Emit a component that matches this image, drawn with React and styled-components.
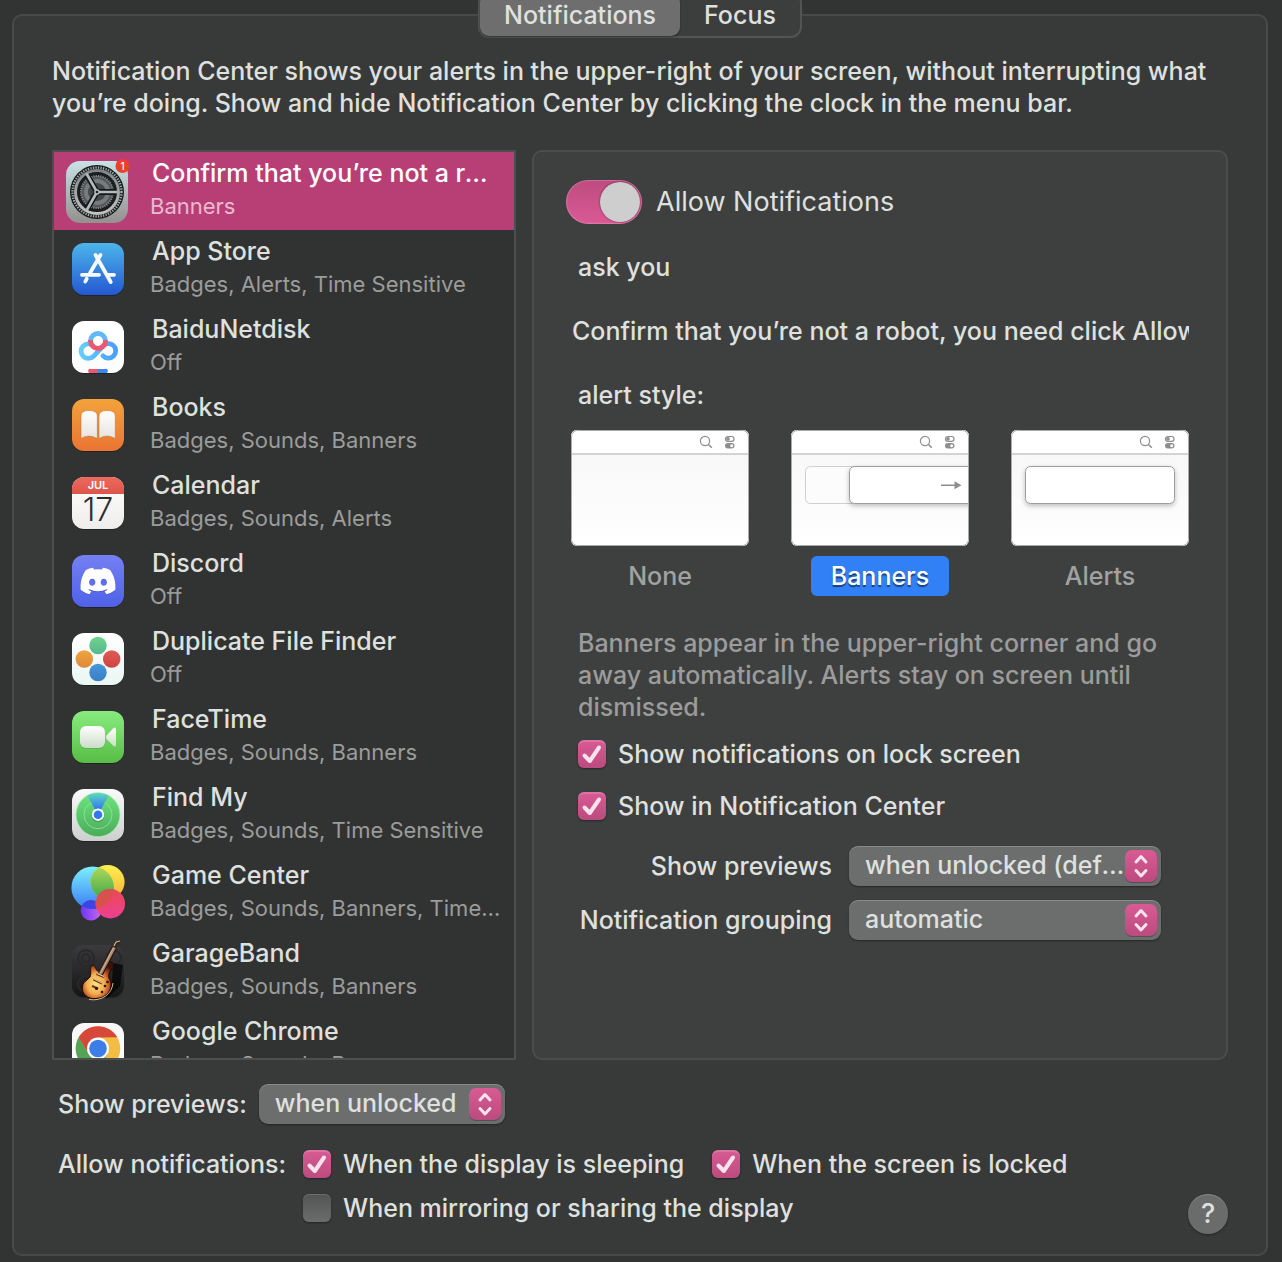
import React, { useState } from 'react';
import styled, { createGlobalStyle, css } from 'styled-components';
import { FaDiscord } from 'react-icons/fa';

const GlobalStyle = createGlobalStyle`
  * { box-sizing: border-box; }
  body {
    margin: 0;
    background: #323433;
    color: #dfe0df;
    font: 500 25px/32px Inter, "Liberation Sans", sans-serif;
  }
  button, select, input { font: inherit; color: inherit; margin: 0; }
  p { margin: 0; }
`;

const Page = styled.div`
  display: flex;
  flex-direction: column;
  min-height: 100vh;
  padding: 0 14px 6px 12px;
  overflow: hidden;
`;

const Tabs = styled.div`
  position: relative;
  z-index: 1;
  display: flex;
  align-self: center;
  height: 46px;
  margin: -8px 0 -24px;
  border: 2px solid #525453;
  border-radius: 11px;
  background: #3c3e3d;
`;

const Tab = styled.button`
  padding: 0 24px;
  border: 0;
  border-radius: 9px;
  background: ${props => props.$active ? '#6d6e6d' : 'transparent'};
  box-shadow: ${props => props.$active ? '0 1px 2px rgba(0, 0, 0, 0.4)' : 'none'};
`;

const Frame = styled.main`
  flex: 1;
  display: flex;
  flex-direction: column;
  padding: 39px 38px 20px;
  border: 2px solid #484a49;
  border-radius: 10px;
  background: #383a39;
`;

const Intro = styled.p`
  margin: 0 0 31px;
`;

const Split = styled.div`
  flex: 1;
  display: grid;
  grid-template-columns: 2fr 3fr;
  gap: 16px;
`;

/* size containment lets the list scroll inside the height of the panel */
const AppList = styled.ul`
  contain: size;
  margin: 0;
  padding: 0;
  list-style: none;
  overflow-y: auto;
  scrollbar-width: none;
  border: 2px solid #4d4f4e;
  background: #313332;
`;

const AppRow = styled.button`
  display: flex;
  width: 100%;
  height: 78px;
  padding: 0 12px 0 0;
  border: 0;
  text-align: left;
  background: ${props => props.$active ? '#b83f76' : 'transparent'};
  color: ${props => props.$active ? '#fff' : '#dfe0df'};
`;

const IconBox = styled.svg`
  flex: none;
  width: 84px;
  height: 78px;
`;

const AppText = styled.span`
  flex: 1;
  min-width: 0;
  display: flex;
  flex-direction: column;
  gap: 1px;
  padding: 5px 0 0 12px;
`;

const ellipsis = css`
  white-space: nowrap;
  overflow: hidden;
  text-overflow: ellipsis;
`;

const AppName = styled.span`
  padding: 0 8px 0 2px;
  ${ellipsis}
`;

const AppDetail = styled.span`
  font-size: 22px;
  font-weight: 400;
  color: ${props => props.$active ? '#ebb9d0' : '#9b9c9b'};
  ${ellipsis}
`;

const Panel = styled.section`
  min-width: 0;
  padding: 28px 37px 28px 32px;
  border: 2px solid #4b4d4c;
  border-radius: 10px;
  background: #3e403f;
`;

const SwitchRow = styled.label`
  display: flex;
  align-items: center;
  gap: 14px;
  font-size: 27px;
  font-weight: 400;
`;

const Switch = styled.input`
  appearance: none;
  width: 76px;
  height: 44px;
  padding: 2px;
  border-radius: 22px;
  background: #5b5d5c;
  box-shadow: inset 0 0 1px 1px rgba(255, 255, 255, 0.2);
  &::before {
    content: '';
    display: block;
    width: 40px;
    height: 40px;
    border-radius: 50%;
    background: #cecece;
    box-shadow: 0 0 2px rgba(0, 0, 0, 0.6);
  }
  &:checked { background: linear-gradient(#bd4b80, #da5a95); }
  &:checked::before { margin-left: 32px; }
`;

const Line = styled.p`
  margin: 0 0 32px ${props => props.$indent}px;
  white-space: nowrap;
  overflow: hidden;
`;

const Lines = styled.div`
  padding-top: 27px;
`;

const Styles = styled.div`
  display: grid;
  grid-template-columns: repeat(3, 178px);
  justify-content: space-between;
  margin: -13px 0 31px 5px;
`;

const StyleOption = styled.label`
  display: flex;
  flex-direction: column;
  align-items: center;
  gap: 10px;
`;

const HiddenRadio = styled.input`
  appearance: none;
  position: absolute;
`;

const Caption = styled.span`
  padding: 4px 20px;
  border-radius: 6px;
  color: #a1a2a1;
  ${props => props.$active && css`
    background: #3280f5;
    color: #fff;
    text-shadow: 0 2px 1px rgba(0, 0, 0, 0.5);
  `}
`;

const Note = styled.p`
  margin-left: 12px;
  color: #9b9c9b;
`;

const Checks = styled.div`
  display: flex;
  flex-direction: column;
  gap: 20px;
  margin: 15px 0 24px 12px;
`;

const CheckLabel = styled.label`
  display: flex;
  align-items: center;
  gap: 12px;
`;

const CheckBox = styled.span`
  display: grid;
  flex: none;
  width: 28px;
  height: 32px;
  align-items: center;
  & > * { grid-area: 1 / 1; }
  & > svg { pointer-events: none; }
  & > input:not(:checked) + svg { visibility: hidden; }
`;

const CheckInput = styled.input`
  appearance: none;
  width: 28px;
  height: 28px;
  border-radius: 6px;
  background: linear-gradient(#525453, #6b6d6c);
  box-shadow: inset 0 1px 0 rgba(255, 255, 255, 0.15), 0 1px 2px rgba(0, 0, 0, 0.4);
  &:checked {
    background: linear-gradient(#d95b94, #bb4b7f);
    box-shadow: inset 0 2px 0 rgba(255, 255, 255, 0.15), 0 1px 2px rgba(0, 0, 0, 0.4);
  }
`;

const Fields = styled.div`
  display: grid;
  grid-template-columns: 254px minmax(0, 312px);
  gap: 14px 17px;
  align-items: center;
  margin-left: 12px;
`;

const FieldLabel = styled.label`
  white-space: nowrap;
  text-align: ${props => props.$right ? 'right' : 'left'};
`;

const SelectBox = styled.span`
  display: grid;
  align-items: center;
  & > * { grid-area: 1 / 1; }
  & > svg {
    justify-self: end;
    margin-right: 3px;
    pointer-events: none;
  }
`;

const SelectInput = styled.select`
  appearance: none;
  width: 100%;
  height: 40px;
  padding: 0 36px 2px 16px;
  border: 0;
  border-radius: 9px;
  background: #6c6e6d;
  box-shadow: inset 0 1px 0 rgba(255, 255, 255, 0.2), 0 1px 2px rgba(0, 0, 0, 0.4);
  ${ellipsis}
`;

const Footer = styled.footer`
  display: grid;
  grid-template-columns: auto 1fr auto;
  padding: 24px 0 0 6px;
`;

const PreviewRow = styled.div`
  grid-column: 1 / -1;
  display: flex;
  align-items: center;
  gap: 12px;
  margin-bottom: 24px;
`;

const FooterSelect = styled.div`
  width: 246px;
`;

const FooterChecks = styled.div`
  display: flex;
  flex-wrap: wrap;
  gap: 12px 28px;
  padding: 0 0 10px 17px;
`;

const FullRow = styled.div`
  width: 100%;
`;

const Help = styled.button`
  align-self: end;
  width: 40px;
  height: 40px;
  padding: 0;
  border: 0;
  border-radius: 50%;
  background: #6a6c6b;
  box-shadow: inset 0 1px 0 rgba(255, 255, 255, 0.2), 0 1px 2px rgba(0, 0, 0, 0.4);
  font-size: 27px;
`;

const Gradient = ({ id, from, to }) => (
  <linearGradient id={id} x1="0" y1="0" x2="0" y2="1">
    <stop offset="0" stopColor={from} />
    <stop offset="1" stopColor={to} />
  </linearGradient>
);

const Tile = ({ id, from, to }) => (
  <>
    <defs><Gradient id={id} from={from} to={to} /></defs>
    <rect x="18" y="14" width="52" height="52" rx="12" fill="#000" opacity="0.3" />
    <rect x="18" y="13" width="52" height="52" rx="12" fill={`url(#${id})`} />
  </>
);

const SettingsIcon = () => (
  <IconBox viewBox="0 0 84 78">
    <defs>
      <Gradient id="set" from="#c9e2e7" to="#93908d" />
      <Gradient id="setRing" from="#7d8789" to="#c4c4c2" />
    </defs>
    <rect x="12" y="9" width="62" height="62" rx="14" fill="url(#set)" />
    <circle cx="43" cy="40" r="27" fill="#1b1d1e" />
    <circle cx="43" cy="40" r="24.5" fill="none" stroke="#a4acad" strokeWidth="2.4" strokeDasharray="1.3 1.27" />
    <circle cx="43" cy="40" r="21.5" fill="none" stroke="url(#setRing)" strokeWidth="3" />
    <circle cx="43" cy="40" r="16" fill="#54585a" stroke="#858b8c" strokeWidth="2" strokeDasharray="1.2 1.1" />
    <circle cx="43" cy="40" r="13" fill="#777b7c" />
    <circle cx="43" cy="40" r="9" fill="#44484a" />
    <g stroke="#16191a" strokeWidth="6">
      <path d="M43 40h19M43 40L33 23M43 40L33 57" />
    </g>
    <g stroke="#b4bbbc" strokeWidth="2.6">
      <path d="M43 40h20M43 40L32.5 21.5M43 40L32.5 58.5" />
    </g>
    <circle cx="43" cy="40" r="2.8" fill="#b4bbbc" />
    <circle cx="43" cy="40" r="1.3" fill="#222" />
    <circle cx="68.5" cy="14" r="7" fill="#ea4128" />
    <text x="68.5" y="17.5" fill="#fff" fontSize="10" textAnchor="middle">1</text>
  </IconBox>
);

const AppStoreIcon = () => (
  <IconBox viewBox="0 0 84 78">
    <Tile id="store" from="#4cb5ea" to="#2458d2" />
    <g stroke="#f7faff" strokeWidth="3.8" strokeLinecap="round" fill="none">
      <path d="M28 44.8H45M54.5 44.8H60" />
      <path d="M46.5 25L36 43M32.7 48.8L31.3 51.5" />
      <path d="M41.5 25L56.7 52" />
    </g>
  </IconBox>
);

const BaiduIcon = () => (
  <IconBox viewBox="0 0 84 78">
    <Tile id="baidu" from="#ffffff" to="#fdfdfd" />
    <defs>
      <linearGradient id="baiduBlue" x1="0" y1="0" x2="1" y2="0">
        <stop offset="0" stopColor="#68ccfa" />
        <stop offset="1" stopColor="#48a0fb" />
      </linearGradient>
    </defs>
    <g fill="none" strokeWidth="4.8">
      <path d="M49 47.8A7.3 7.3 0 1 0 48.5 38.5L39.5 48.3A7.3 7.3 0 1 1 39 37.5" stroke="url(#baiduBlue)" strokeLinecap="round" />
      <path d="M36.5 33.5V33A7.5 7.5 0 0 1 51.5 33V33.5" stroke="#61b9f8" />
      <path d="M36.5 32V33A7.5 7.5 0 0 0 51.5 33V32" stroke="#ee5770" />
    </g>
    <path d="M44 61H37a2 2 0 0 0-1.5 4H44z" fill="#ee5770" />
    <path d="M44 61h7a2 2 0 0 1 1.5 4H44z" fill="#3f86f5" />
  </IconBox>
);

const BooksIcon = () => (
  <IconBox viewBox="0 0 84 78">
    <Tile id="books" from="#f2a33b" to="#ea7434" />
    <defs><Gradient id="page" from="#ffffff" to="#e6e4e1" /></defs>
    <g fill="url(#page)" stroke="#c9692a" strokeWidth="0.5">
      <path d="M27 30Q27 24.5 35 24.5Q43.3 24.5 43.3 30V52.5Q35 47.5 27 52.5z" />
      <path d="M45 30Q45 24.5 53 24.5Q61.3 24.5 61.3 30V52.5Q53 47.5 45 52.5z" />
    </g>
  </IconBox>
);

const CalendarIcon = () => (
  <IconBox viewBox="0 0 84 78">
    <Tile id="cal" from="#ffffff" to="#eeedeb" />
    <defs><Gradient id="calTop" from="#ec6a5f" to="#de5449" /></defs>
    <path d="M18 30V25a12 12 0 0 1 12-12h28a12 12 0 0 1 12 12v5z" fill="url(#calTop)" />
    <text x="44" y="25" fill="#fff" fontSize="11" fontWeight="600" textAnchor="middle">JUL</text>
    <text x="44" y="57" fill="#2d2d2d" fontSize="32" fontWeight="300" textAnchor="middle">17</text>
  </IconBox>
);

const DiscordIcon = () => (
  <IconBox viewBox="0 0 84 78">
    <Tile id="discord" from="#7480f2" to="#5061e9" />
    <FaDiscord x="25" y="21" size={38} color="#3a48bd" opacity="0.4" />
    <FaDiscord x="25" y="20" size={38} color="#fff" />
  </IconBox>
);

const DuplicateIcon = () => (
  <IconBox viewBox="0 0 84 78">
    <Tile id="dup" from="#ffffff" to="#e9f7f3" />
    <defs>
      <Gradient id="dupG" from="#6ed48b" to="#58b78f" />
      <Gradient id="dupO" from="#f0a440" to="#dd8a37" />
      <Gradient id="dupR" from="#e25a53" to="#cd4444" />
      <Gradient id="dupB" from="#4796dc" to="#3a7fc4" />
    </defs>
    <circle cx="44" cy="25.5" r="8.7" fill="url(#dupG)" />
    <circle cx="30.3" cy="39" r="8.7" fill="url(#dupO)" />
    <circle cx="57.7" cy="39" r="8.7" fill="url(#dupR)" />
    <circle cx="44" cy="52.5" r="8.7" fill="url(#dupB)" />
  </IconBox>
);

const FaceTimeIcon = () => (
  <IconBox viewBox="0 0 84 78">
    <Tile id="face" from="#87ec7d" to="#57bd46" />
    <defs><Gradient id="cam" from="#ffffff" to="#ccdcc8" /></defs>
    <rect x="26" y="29" width="25" height="22" rx="6" fill="#3f9a32" opacity="0.4" />
    <rect x="26" y="28" width="25" height="22" rx="6" fill="url(#cam)" />
    <path d="M52.5 37.5L59.5 30Q62 28.5 62 31V47Q62 49.5 59.5 48L52.5 41Q51.5 39.3 52.5 37.5z" fill="url(#cam)" />
  </IconBox>
);

const FindMyIcon = () => (
  <IconBox viewBox="0 0 84 78">
    <Tile id="find" from="#fbfbfb" to="#cfcecf" />
    <defs>
      <Gradient id="findG" from="#6ee57f" to="#4bab5a" />
      <Gradient id="beam" from="#5fd8c0" to="#1f55ff" />
    </defs>
    <circle cx="44" cy="38.7" r="22" fill="url(#findG)" stroke="#9df0a7" strokeWidth="0.8" />
    <circle cx="44" cy="38.7" r="14" fill="none" stroke="#8fe89b" strokeWidth="0.8" />
    <path d="M44 39L33.5 19.5Q44 14.5 54.5 19.5z" fill="url(#beam)" />
    <circle cx="44" cy="39.5" r="6.5" fill="#255f33" opacity="0.4" />
    <circle cx="44" cy="38.7" r="6.2" fill="#fff" />
    <circle cx="44" cy="38.7" r="4.3" fill="#3478f0" />
  </IconBox>
);

const GameCenterIcon = () => (
  <IconBox viewBox="0 0 84 78">
    <defs>
      <Gradient id="gcB" from="#7df0fb" to="#3a7cf5" />
      <Gradient id="gcY" from="#fdf04f" to="#f4b13c" />
      <Gradient id="gcG" from="#b4dc5c" to="#3fa54a" />
      <linearGradient id="gcP"><stop stopColor="#6a35f5" /><stop offset="1" stopColor="#c868f0" /></linearGradient>
      <Gradient id="gcR" from="#e94a54" to="#ee3f92" />
      <clipPath id="gcClip"><circle cx="38.7" cy="33.7" r="21.3" /></clipPath>
    </defs>
    <circle cx="37" cy="56.3" r="10.3" fill="url(#gcP)" />
    <circle cx="38.7" cy="33.7" r="21.3" fill="url(#gcB)" />
    <g clipPath="url(#gcClip)"><circle cx="37" cy="56.3" r="10.3" fill="#3d44e6" /></g>
    <circle cx="53.6" cy="28" r="17" fill="url(#gcY)" />
    <g clipPath="url(#gcClip)"><circle cx="53.6" cy="28" r="17" fill="url(#gcG)" /></g>
    <circle cx="56.3" cy="49.7" r="14.7" fill="url(#gcR)" />
    <g clipPath="url(#gcClip)"><circle cx="56.3" cy="49.7" r="14.7" fill="#d9514f" /></g>
  </IconBox>
);

const GarageBandIcon = () => (
  <IconBox viewBox="0 0 84 78">
    <Tile id="garage" from="#3b3b3e" to="#151516" />
    <defs>
      <radialGradient id="sunburst" cx="0.42" cy="0.6" r="0.62">
        <stop offset="0" stopColor="#fde583" />
        <stop offset="0.45" stopColor="#f3ac4e" />
        <stop offset="0.75" stopColor="#b4431d" />
        <stop offset="1" stopColor="#3d120a" />
      </radialGradient>
    </defs>
    <g fill="none" stroke="#29292b" strokeWidth="2">
      <circle cx="32" cy="26" r="8" />
      <circle cx="32" cy="26" r="4" />
      <circle cx="60" cy="26" r="7" />
      <circle cx="32" cy="52" r="8" />
    </g>
    <path d="M59 31L69 33L66 54L52 67L58 50z" fill="#060606" opacity="0.8" />
    <path d="M38 33.5C35 35 38 41 36 45C34 48 29.5 49 28.5 54C27 62 34 67.5 42 66.5C51 66 57.5 60 57 52C56.5 47 53.5 46 55 42C56.5 38 61 35 59.5 31.5C58 28.5 53 30 50.5 33.5C48 37 46 40 43.5 39C41.5 37.5 41 32.5 38 33.5z" fill="url(#sunburst)" stroke="#1c0a06" strokeWidth="1" />
    <path d="M35 67.5C48 69.5 58 62 59 51" fill="none" stroke="#d2b68e" strokeWidth="1" />
    <path d="M46.5 42L60.5 15" stroke="#241512" strokeWidth="5.4" />
    <path d="M46.5 41.5L60.5 15" stroke="#a88468" strokeWidth="3.2" />
    <path d="M46 42L60 15" stroke="#dcc6ae" strokeWidth="0.7" />
    <path d="M58.5 15L61 9.5L67 8.5L65.5 11.5L62 16z" fill="#342622" />
    <path d="M60 14L62 10L66 9" fill="none" stroke="#d3b786" strokeWidth="1.2" />
    <path d="M42.5 42L50 45M39.5 47.5L48 51.5M38 54L44 56.5" stroke="#6d3a1c" strokeWidth="2.2" />
    <path d="M43 41.5L50 44.5M40 47L48 51" stroke="#e6d7a8" strokeWidth="1" />
    <g fill="#2b150d">
      <circle cx="42.5" cy="56.5" r="1.6" />
      <circle cx="51" cy="54" r="1.3" />
      <circle cx="53.5" cy="50" r="1.3" />
      <circle cx="48" cy="60" r="1.3" />
    </g>
  </IconBox>
);

const ChromeIcon = () => (
  <IconBox viewBox="0 0 84 78">
    <Tile id="chrome" from="#f7f7f7" to="#ffffff" />
    <circle cx="44" cy="38.5" r="22.3" fill="#f3bd44" />
    <path d="M24.7 27.35A22.3 22.3 0 0 0 44 60.8L53.5 44L34.5 44z" fill="#52a457" />
    <path d="M24.7 27.35A22.3 22.3 0 0 1 63.3 27.35L44 27.4L34.5 44z" fill="#d6493a" />
    <circle cx="44" cy="38.5" r="11" fill="#fff" />
    <circle cx="44" cy="38.5" r="8.8" fill="#3c7de8" />
  </IconBox>
);

const Mark = () => (
  <svg width="28" height="28" viewBox="0 0 28 28" fill="none" stroke="#f8e3ec" strokeWidth="4" strokeLinecap="round" strokeLinejoin="round">
    <path d="M6.5 15.5L11.8 21L21 7.5" />
  </svg>
);

const Arrows = () => (
  <svg width="34" height="34" viewBox="0 0 34 34">
    <defs><Gradient id="arrows" from="#d95b94" to="#bb4b7f" /></defs>
    <rect x="1" y="2" width="32" height="32" rx="7" fill="#000" opacity="0.25" />
    <rect x="1" y="1" width="32" height="32" rx="7" fill="url(#arrows)" />
    <path d="M12 13L17 7.5L22 13M12 21.5L17 27L22 21.5" fill="none" stroke="#f8e3ec" strokeWidth="3" strokeLinecap="round" strokeLinejoin="round" />
  </svg>
);

const Preview = ({ kind }) => (
  <svg width="178" height="116" viewBox="0 0 178 116">
    <defs>
      <Gradient id={`sky${kind}`} from="#f6f6f6" to="#ffffff" />
      <clipPath id={`clip${kind}`}><rect width="178" height="116" rx="6" /></clipPath>
      <filter id={`soft${kind}`} x="-10%" y="-30%" width="120%" height="180%">
        <feDropShadow dx="0" dy="2" stdDeviation="2.5" floodOpacity="0.25" />
      </filter>
    </defs>
    <g clipPath={`url(#clip${kind})`}>
      <rect width="178" height="116" fill={`url(#sky${kind})`} />
      <rect width="178" height="23" fill="#fff" />
      <rect y="23" width="178" height="2" fill="#d3d3d3" />
      <g fill="none" stroke="#8e8e8e" strokeWidth="1.2">
        <circle cx="134" cy="11" r="4.6" />
        <path d="M137.5 14.5L140.8 17.8" strokeWidth="1.6" />
        <rect x="154.5" y="6.5" width="8.5" height="4.8" rx="2.4" />
      </g>
      <circle cx="157" cy="8.9" r="1.8" fill="#8e8e8e" />
      <rect x="154" y="13" width="9.5" height="5.5" rx="2.7" fill="#8e8e8e" />
      <circle cx="160.7" cy="15.7" r="1.5" fill="#fff" />
      {kind === 'Banners' && (
        <>
          <rect x="14.5" y="36.5" width="80" height="37" rx="5" fill="#fcfcfc" stroke="#d0d0d0" />
          <rect x="58.5" y="36.5" width="140" height="37" rx="5" fill="#fff" stroke="#9c9c9c" filter={`url(#soft${kind})`} />
          <path d="M150 55.3H165" stroke="#8e8e8e" strokeWidth="1.5" />
          <path d="M163.5 51.3L170.5 55.3L163.5 59.3z" fill="#8e8e8e" />
        </>
      )}
      {kind === 'Alerts' && (
        <rect x="14.5" y="36.5" width="149" height="37" rx="5" fill="#fff" stroke="#9c9c9c" filter={`url(#soft${kind})`} />
      )}
    </g>
    <rect x="0.5" y="0.5" width="177" height="115" rx="6" fill="none" stroke="#a9a9a9" />
  </svg>
);

const Check = ({ label, defaultChecked }) => (
  <CheckLabel>
    <CheckBox>
      <CheckInput type="checkbox" defaultChecked={defaultChecked} />
      <Mark />
    </CheckBox>
    {label}
  </CheckLabel>
);

const Select = ({ id, options }) => (
  <SelectBox>
    <SelectInput id={id}>
      {options.map(option => <option key={option}>{option}</option>)}
    </SelectInput>
    <Arrows />
  </SelectBox>
);

const apps = [
  { name: 'Confirm that you’re not a robot', detail: 'Banners', Icon: SettingsIcon },
  { name: 'App Store', detail: 'Badges, Alerts, Time Sensitive', Icon: AppStoreIcon },
  { name: 'BaiduNetdisk', detail: 'Off', Icon: BaiduIcon },
  { name: 'Books', detail: 'Badges, Sounds, Banners', Icon: BooksIcon },
  { name: 'Calendar', detail: 'Badges, Sounds, Alerts', Icon: CalendarIcon },
  { name: 'Discord', detail: 'Off', Icon: DiscordIcon },
  { name: 'Duplicate File Finder', detail: 'Off', Icon: DuplicateIcon },
  { name: 'FaceTime', detail: 'Badges, Sounds, Banners', Icon: FaceTimeIcon },
  { name: 'Find My', detail: 'Badges, Sounds, Time Sensitive', Icon: FindMyIcon },
  { name: 'Game Center', detail: 'Badges, Sounds, Banners, Time Sensitive', Icon: GameCenterIcon },
  { name: 'GarageBand', detail: 'Badges, Sounds, Banners', Icon: GarageBandIcon },
  { name: 'Google Chrome', detail: 'Badges, Sounds, Banners', Icon: ChromeIcon },
];

const App = () => {
  const [tab, setTab] = useState('Notifications');
  const [selected, setSelected] = useState(0);
  const [style, setStyle] = useState('Banners');

  return (
    <Page>
      <GlobalStyle />
      <Tabs>
        {['Notifications', 'Focus'].map(name => (
          <Tab key={name} $active={tab === name} onClick={() => setTab(name)}>{name}</Tab>
        ))}
      </Tabs>
      <Frame>
        <Intro>
          Notification Center shows your alerts in the upper-right of your screen, without interrupting what you’re doing. Show and hide Notification Center by clicking the clock in the menu bar.
        </Intro>
        <Split>
          <AppList>
            {apps.map(({ name, detail, Icon }, i) => (
              <li key={name}>
                <AppRow $active={selected === i} onClick={() => setSelected(i)}>
                  <Icon />
                  <AppText>
                    <AppName>{name}</AppName>
                    <AppDetail $active={selected === i}>{detail}</AppDetail>
                  </AppText>
                </AppRow>
              </li>
            ))}
          </AppList>
          <Panel>
            <SwitchRow>
              <Switch type="checkbox" role="switch" defaultChecked />
              Allow Notifications
            </SwitchRow>
            <Lines>
              <Line $indent={12}>ask you</Line>
              <Line $indent={6}>Confirm that you’re not a robot, you need click Allow</Line>
              <Line $indent={12}>alert style:</Line>
            </Lines>
            <Styles>
              {['None', 'Banners', 'Alerts'].map(kind => (
                <StyleOption key={kind}>
                  <HiddenRadio type="radio" name="style" checked={style === kind} onChange={() => setStyle(kind)} />
                  <Preview kind={kind} />
                  <Caption $active={style === kind}>{kind}</Caption>
                </StyleOption>
              ))}
            </Styles>
            <Note>
              Banners appear in the upper-right corner and go away automatically. Alerts stay on screen until dismissed.
            </Note>
            <Checks>
              <Check label="Show notifications on lock screen" defaultChecked />
              <Check label="Show in Notification Center" defaultChecked />
            </Checks>
            <Fields>
              <FieldLabel $right htmlFor="app-previews">Show previews</FieldLabel>
              <Select id="app-previews" options={['when unlocked (default)', 'always', 'never']} />
              <FieldLabel $right htmlFor="grouping">Notification grouping</FieldLabel>
              <Select id="grouping" options={['automatic', 'by app', 'off']} />
            </Fields>
          </Panel>
        </Split>
        <Footer>
          <PreviewRow>
            <FieldLabel htmlFor="previews">Show previews:</FieldLabel>
            <FooterSelect>
              <Select id="previews" options={['when unlocked', 'always', 'never']} />
            </FooterSelect>
          </PreviewRow>
          <span>Allow notifications:</span>
          <FooterChecks>
            <Check label="When the display is sleeping" defaultChecked />
            <Check label="When the screen is locked" defaultChecked />
            <FullRow>
              <Check label="When mirroring or sharing the display" />
            </FullRow>
          </FooterChecks>
          <Help aria-label="Help">?</Help>
        </Footer>
      </Frame>
    </Page>
  );
};

export default App;
